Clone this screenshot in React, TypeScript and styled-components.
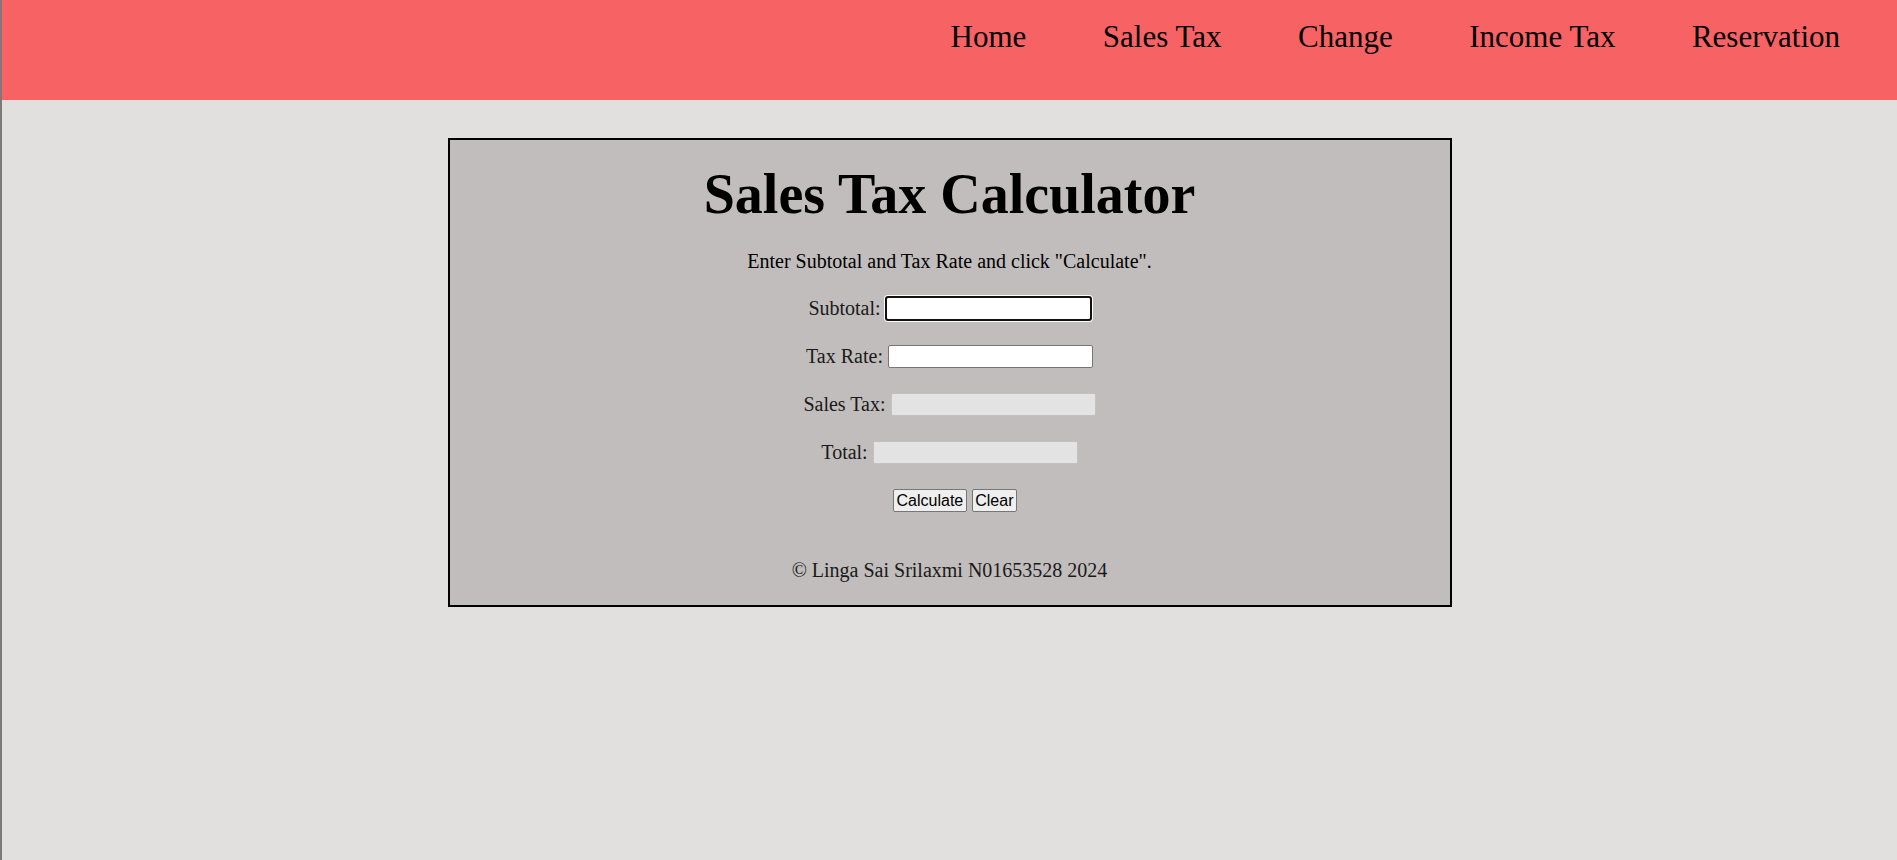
import styled, { createGlobalStyle, css } from "styled-components";

const GlobalStyle = createGlobalStyle`
  html, body {
    margin: 0;
    padding: 0;
    background: #e1e0df;
    font-family: "Liberation Serif", "Times New Roman", serif;
    color: #000;
  }
`;

const Page = styled.div`
  min-height: 100vh;
  border-left: 2px solid;
  border-image: linear-gradient(to right, #7a7a7a 50%, #b0b0b0 50%) 1;
`;

const Header = styled.header`
  height: 100px;
  background: #f76264;
  display: flex;
  justify-content: flex-end;
  align-items: flex-start;
  box-sizing: border-box;
  padding: 19px 57px 0 0;
`;

const Nav = styled.nav`
  display: flex;
  gap: 76.5px;
`;

const NavLink = styled.a`
  font-size: 31px;
  line-height: normal;
  color: #000;
  text-decoration: none;
  cursor: pointer;
`;

const Card = styled.main`
  width: 1000px;
  margin: 38px auto 0;
  border: 2px solid #000;
  background: #c1bdbc;
  text-align: center;
  padding: 0 0 23px;
`;

const Title = styled.h1`
  margin: 22px 0 0;
  font-size: 56px;
  font-weight: bold;
  line-height: normal;
`;

const Intro = styled.p`
  margin: 24px 0 24px;
  font-size: 20px;
  line-height: normal;
`;

const Form = styled.div`
  display: flex;
  flex-direction: column;
  gap: 25px;
`;

const Row = styled.div<{ $shift?: number }>`
  display: flex;
  justify-content: center;
  align-items: center;
  gap: 5px;
  height: 23px;
  padding-left: ${(p) => p.$shift ?? 0}px;
`;

const Label = styled.label`
  font-size: 20px;
  color: #1a1a1a;
`;

const Field = styled.input<{ $focused?: boolean }>`
  box-sizing: border-box;
  width: 205px;
  height: 23px;
  border: 1px solid #767676;
  border-radius: 2px;
  background: #fff;
  padding: 1px 2px;
  font-family: Arial, "Liberation Sans", sans-serif;
  font-size: 16px;

  &:disabled {
    background: #e3e3e3;
    border-color: rgba(118, 118, 118, 0.3);
  }

  ${(p) =>
    p.$focused &&
    css`
      outline: 2px solid #101010;
      outline-offset: -1px;
      box-shadow: 0 0 0 2px #fff;
    `}
`;

const Button = styled.button`
  box-sizing: border-box;
  height: 23px;
  padding: 0 2.5px;
  border: 1px solid #767676;
  border-radius: 2px;
  background: #efefef;
  color: #000;
  font-family: Arial, "Liberation Sans", sans-serif;
  font-size: 16px;
  line-height: 1;
`;

const Footer = styled.p`
  margin: 47px 0 0;
  font-size: 20px;
  line-height: normal;
  color: #1a1a1a;
`;

const links = ["Home", "Sales Tax", "Change", "Income Tax", "Reservation"];

const fields = [
  { id: "subtotal", label: "Subtotal:", focused: true },
  { id: "taxRate", label: "Tax Rate:" },
  { id: "salesTax", label: "Sales Tax:", disabled: true },
  { id: "total", label: "Total:", disabled: true },
];

export default function App() {
  return (
    <>
      <GlobalStyle />
      <Page>
        <Header>
          <Nav>
            {links.map((l) => (
              <NavLink key={l}>{l}</NavLink>
            ))}
          </Nav>
        </Header>

        <Card>
          <Title>Sales Tax Calculator</Title>
          <Intro>Enter Subtotal and Tax Rate and click "Calculate".</Intro>
          <Form>
            {fields.map((f) => (
              <Row key={f.id}>
                <Label htmlFor={f.id}>{f.label}</Label>
                <Field
                  id={f.id}
                  type="text"
                  disabled={f.disabled}
                  $focused={f.focused}
                />
              </Row>
            ))}
            <Row $shift={11}>
              <Button type="button">Calculate</Button>
              <Button type="button">Clear</Button>
            </Row>
          </Form>
          <Footer>© Linga Sai Srilaxmi N01653528 2024</Footer>
        </Card>
      </Page>
    </>
  );
}
